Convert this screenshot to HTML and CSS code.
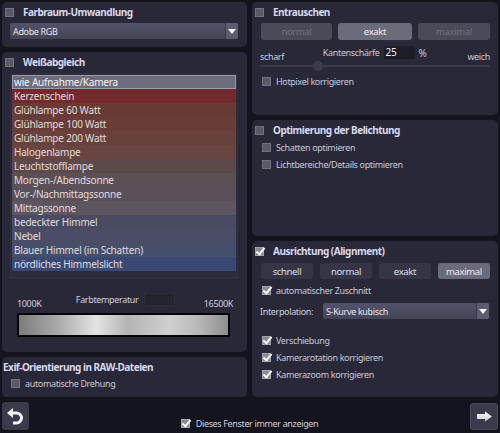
FILE: index.html
```html
<!DOCTYPE html>
<html lang="de">
<head>
<meta charset="utf-8">
<title>Optionen</title>
<link rel="stylesheet" href="styles.css">
</head>
<body>
<div class="app">
  <div class="col">
    <section class="panel p-farb">
      <div class="head"><span class="cb"></span><span class="title">Farbraum-Umwandlung</span></div>
      <div class="select sel-farb">
        <span class="sel-text">Adobe RGB</span>
        <span class="sel-btn"><svg width="8" height="5" viewBox="0 0 8 5"><polygon points="0,0 8,0 4,5" fill="#f4f4f4"/></svg></span>
      </div>
    </section>
    <section class="panel p-wb">
      <div class="head"><span class="cb"></span><span class="title">Weißabgleich</span></div>
      <ul class="list">
        <li class="sel">wie Aufnahme/Kamera</li>
        <li class="c1">Kerzenschein</li>
        <li class="c2">Glühlampe 60 Watt</li>
        <li class="c3">Glühlampe 100 Watt</li>
        <li class="c4">Glühlampe 200 Watt</li>
        <li class="c5">Halogenlampe</li>
        <li class="c6">Leuchtstofflampe</li>
        <li class="c7">Morgen-/Abendsonne</li>
        <li class="c8">Vor-/Nachmittagssonne</li>
        <li class="c9">Mittagssonne</li>
        <li class="c10">bedeckter Himmel</li>
        <li class="c11">Nebel</li>
        <li class="c12">Blauer Himmel (im Schatten)</li>
        <li class="c13">nördliches Himmelslicht</li>
      </ul>
      <div class="temp-row">
        <span class="t-min">1000K</span>
        <span class="t-mid"><span class="t-label">Farbtemperatur</span><span class="t-box"></span></span>
        <span class="t-max">16500K</span>
      </div>
      <div class="grad"></div>
    </section>
    <section class="panel p-exif">
      <div class="head head-plain"><span class="title">Exif-Orientierung in RAW-Dateien</span></div>
      <div class="opt opt-left"><span class="cb"></span><span>automatische Drehung</span></div>
    </section>
  </div>
  <div class="col">
    <section class="panel p-ent">
      <div class="head"><span class="cb"></span><span class="title">Entrauschen</span></div>
      <div class="inner">
        <div class="btns3">
          <span class="btn dis">normal</span>
          <span class="btn act">exakt</span>
          <span class="btn dis">maximal</span>
        </div>
        <div class="slide-row">
          <span class="s-end">scharf</span>
          <span class="s-mid"><span>Kantenschärfe</span><span class="num">25</span><span class="pct">%</span></span>
          <span class="s-end">weich</span>
        </div>
        <div class="track"><span class="knob"></span></div>
      </div>
      <div class="opt opt-hot"><span class="cb"></span><span>Hotpixel korrigieren</span></div>
    </section>
    <section class="panel p-opt">
      <div class="head"><span class="cb"></span><span class="title">Optimierung der Belichtung</span></div>
      <div class="opt opt-first"><span class="cb"></span><span>Schatten optimieren</span></div>
      <div class="opt"><span class="cb"></span><span>Lichtbereiche/Details optimieren</span></div>
    </section>
    <section class="panel p-aus">
      <div class="head"><span class="cb on"></span><span class="title">Ausrichtung (Alignment)</span></div>
      <div class="inner">
        <div class="btns4">
          <span class="btn dark">schnell</span>
          <span class="btn dark">normal</span>
          <span class="btn dark">exakt</span>
          <span class="btn act">maximal</span>
        </div>
      </div>
      <div class="opt opt-crop"><span class="cb on"></span><span>automatischer Zuschnitt</span></div>
      <div class="interp">
        <span class="i-label">Interpolation:</span>
        <div class="select sel-interp">
          <span class="sel-text">S-Kurve kubisch</span>
          <span class="sel-btn"><svg width="8" height="5" viewBox="0 0 8 5"><polygon points="0,0 8,0 4,5" fill="#f4f4f4"/></svg></span>
        </div>
      </div>
      <div class="opt opt-shift"><span class="cb on"></span><span>Verschiebung</span></div>
      <div class="opt"><span class="cb on"></span><span>Kamerarotation korrigieren</span></div>
      <div class="opt"><span class="cb on"></span><span>Kamerazoom korrigieren</span></div>
    </section>
  </div>
</div>
<div class="bottom">
  <span class="nav back">
    <svg width="27" height="28" viewBox="0 0 27 28">
      <path d="M10 11 H14.5 A5 5 0 0 1 14.5 21 H11" fill="none" stroke="#f2f2f2" stroke-width="3"/>
      <polygon points="5,11 11,6 11,16" fill="#f2f2f2"/>
    </svg>
  </span>
  <div class="show">
    <span class="cb on"></span><span>Dieses Fenster immer anzeigen</span>
  </div>
  <span class="nav fwd">
    <svg width="28" height="27" viewBox="0 0 28 27">
      <defs><linearGradient id="ag" x1="0" y1="0" x2="0" y2="1"><stop offset="0" stop-color="#ffffff"/><stop offset="1" stop-color="#c8c8cc"/></linearGradient></defs>
      <polygon points="7,11 15,11 15,8.5 22,13.5 15,18.5 15,16 7,16" fill="url(#ag)"/>
    </svg>
  </span>
</div>
</body>
</html>
```
FILE: styles.css
```css
html, body {
  margin: 0;
  padding: 0;
}
body {
  width: 500px;
  height: 433px;
  overflow: hidden;
  background: #14141f;
  font-family: "Noto Sans", "Open Sans", sans-serif;
  font-size: 9px;
  letter-spacing: -0.35px;
  color: #c9c9d6;
}
.app {
  display: grid;
  grid-template-columns: 245px 246px;
  column-gap: 5px;
  padding: 2px 2px 0;
}
.col {
  display: flex;
  flex-direction: column;
  gap: 5px;
}
.panel {
  background: #282838;
  border-radius: 5px;
  padding: 2px 3px 0;
  box-sizing: border-box;
}
.p-farb { height: 45px; }
.p-wb { height: 300px; }
.p-exif { height: 40px; }
.p-ent { height: 113px; }
.p-opt { height: 116px; }
.p-aus { height: 156px; }

.head {
  display: flex;
  align-items: center;
  height: 16px;
}
.head .cb { margin-right: 9px; }
.head-plain { margin-left: -2px; }
.title {
  font-weight: bold;
  font-size: 10px;
  letter-spacing: -0.5px;
  color: #d8d8ee;
}
.cb {
  display: inline-block;
  position: relative;
  width: 9px;
  height: 9px;
  box-sizing: border-box;
  border: 1px solid #72727e;
  background: #5a5a64;
  flex: none;
}
.cb.on {
  background: #8a8a94;
  border-color: #a4a4ac;
}
.cb.on::after {
  content: "";
  position: absolute;
  left: 2px;
  top: -2px;
  width: 3px;
  height: 7px;
  border-right: 2px solid #f4f4f4;
  border-bottom: 2px solid #f4f4f4;
  transform: rotate(40deg);
}

.select {
  display: flex;
  height: 16px;
  border-radius: 2px;
  overflow: hidden;
  background: linear-gradient(#52526a, #444456);
  color: #e6e6ee;
}
.sel-text {
  flex: 1;
  display: flex;
  align-items: center;
  padding-left: 3px;
}
.sel-btn {
  width: 12px;
  display: flex;
  align-items: center;
  justify-content: center;
  background: #5c5c6e;
  border-left: 1px solid #3a3a4a;
}
.sel-farb {
  margin: 3px 6px 0 5px;
}

.list {
  list-style: none;
  margin: 3px 6px 0 5px;
  padding: 1px 1px 0;
  height: 206px;
  box-sizing: border-box;
  background: #2c2c3c;
  border: 1px solid #30303f;
  border-radius: 1px;
}
.list li {
  height: 14px;
  line-height: 14px;
  padding-left: 2px;
  box-sizing: border-box;
  color: #e0dcdc;
  font-size: 10px;
  letter-spacing: -0.2px;
}
.list li.sel {
  background: #6c6c7c;
  border: 1px solid #9c9cac;
  line-height: 12px;
  padding-left: 1px;
  color: #f4f4f8;
}
.c1 { background: #74292d; }
.c2 { background: #683a36; }
.c3 { background: #683d38; }
.c4 { background: #68413c; }
.c5 { background: #684541; }
.c6 { background: #5d494b; }
.c7 { background: #5c5057; }
.c8 { background: #595059; }
.c9 { background: #5d5661; }
.c10 { background: #4a4a62; }
.c11 { background: #4b4d66; }
.c12 { background: #454f6c; }
.c13 { background: #3a4874; }

.temp-row {
  display: flex;
  align-items: flex-start;
  height: 13px;
  margin: 14px 11px 0 12px;
  color: #d0d0dc;
}
.t-min, .t-max { margin-top: 4px; }
.t-mid {
  display: flex;
  align-items: flex-start;
  margin: 0 auto;
  padding-left: 6px;
}
.t-label { margin-top: 0; }
.t-box {
  width: 31px;
  height: 13px;
  margin-left: 6px;
  box-sizing: border-box;
  background: #24242f;
  border: 1px solid #2e2e3b;
}
.grad {
  margin: 7px 0 0 12px;
  width: 213px;
  height: 24px;
  box-sizing: border-box;
  border: 2px solid #050508;
  background: linear-gradient(90deg, #7c7c7c 0%, #a8a8a8 18%, #e4e4e4 37%, #b4b4b4 52%, #cfcfcf 72%, #b8b8b8 86%, #8e8e8e 100%);
}

.opt {
  display: flex;
  align-items: center;
  height: 17px;
  padding-left: 7px;
}
.opt .cb { margin-right: 5px; }
.opt-left { padding-left: 6px; }
.opt-hot { margin-top: 6px; }
.opt-first { margin-top: 1px; }
.opt-crop { margin-top: 3px; }
.opt-shift { margin-top: 13px; }

.inner { margin: 0 5px 0 6px; }
.btns3 {
  display: grid;
  grid-template-columns: 71px 74px 72px;
  column-gap: 6px;
  margin-top: 3px;
}
.btns4 {
  display: grid;
  grid-template-columns: repeat(4, 52px);
  column-gap: 7px;
  margin-top: 4px;
}
.btn {
  display: flex;
  align-items: center;
  justify-content: center;
  height: 17px;
  border-radius: 3px;
  font-size: 9.5px;
}
.btns4 .btn { height: 16px; }
.btn.dis {
  background: #4a4a58;
  color: #72727f;
}
.btn.act {
  background: #6b6b7c;
  color: #ececf4;
}
.btn.dark {
  background: #353546;
  color: #dcdcea;
}

.slide-row {
  display: flex;
  align-items: flex-start;
  height: 13px;
  margin-top: 6px;
  margin-left: -1px;
}
.s-end { margin-top: 4px; }
.s-mid {
  display: flex;
  align-items: flex-start;
  margin: 0 auto;
  padding-right: 8px;
  padding-left: 6px;
}
.num {
  width: 31px;
  height: 13px;
  box-sizing: border-box;
  margin-left: 4px;
  padding-left: 2px;
  background: #1d1d2a;
  color: #f0f0f4;
  font-size: 10px;
  line-height: 13px;
}
.pct { margin-left: 4px; font-size: 10px; }
.track {
  position: relative;
  height: 2px;
  margin-top: 6px;
  margin-left: -1px;
  background: #3a3a4c;
  border-radius: 1px;
}
.knob {
  position: absolute;
  left: 53px;
  top: -4px;
  width: 10px;
  height: 10px;
  border-radius: 50%;
  background: #3c3c4e;
}

.interp {
  display: flex;
  align-items: center;
  margin: 4px 6px 0 5px;
}
.i-label {
  width: 63px;
  color: #d0d0dc;
}
.sel-interp {
  flex: 1;
  height: 16px;
}

.bottom {
  display: flex;
  align-items: flex-start;
  height: 36px;
  padding: 0 2px;
}
.nav {
  display: block;
  background: #3a3a4b;
  border-radius: 3px;
}
.nav svg { display: block; }
.back {
  width: 27px;
  height: 28px;
  margin-top: 5px;
}
.fwd {
  width: 28px;
  height: 27px;
  margin-top: 6px;
  box-sizing: border-box;
  border: 1px solid #4a4a5c;
}
.fwd svg { margin: -1px; }
.show {
  flex: 1;
  display: flex;
  align-items: center;
  justify-content: center;
  margin-top: 21px;
  height: 10px;
  color: #d0d0dc;
}
.show .cb { margin-right: 6px; }
```
